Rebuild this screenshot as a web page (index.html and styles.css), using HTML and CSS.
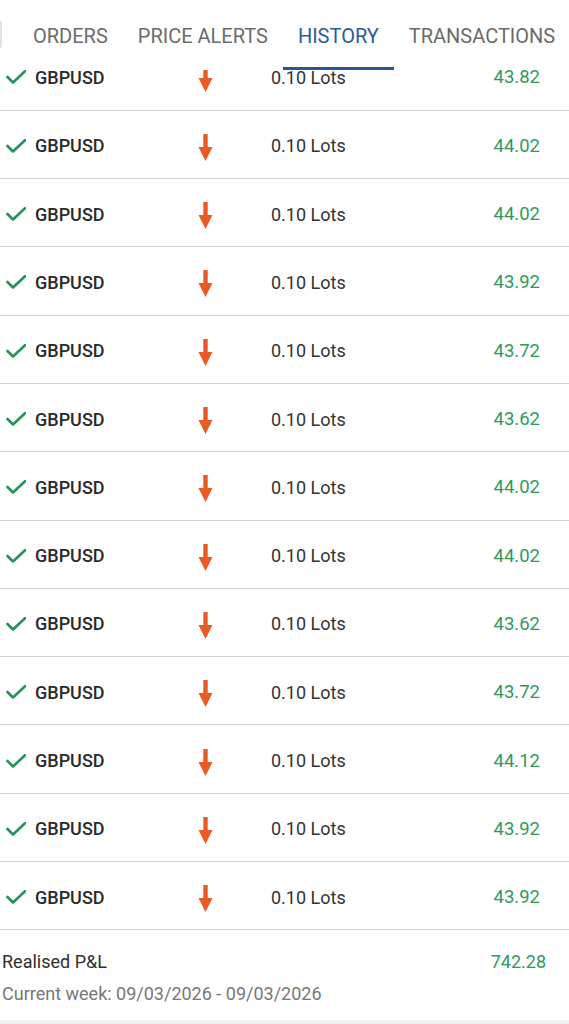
FILE: index.html
```html
<!DOCTYPE html>
<html lang="en">
<head>
<meta charset="utf-8">
<title>History</title>
<link rel="stylesheet" href="styles.css">
</head>
<body>
<div class="screen">
  <nav class="tabs">
    <span class="edge"></span>
    <div class="tab">ORDERS<i class="ind"></i></div>
    <div class="tab">PRICE ALERTS<i class="ind"></i></div>
    <div class="tab active">HISTORY<i class="ind"></i></div>
    <div class="tab">TRANSACTIONS<i class="ind"></i></div>
  </nav>
  <div class="viewport">
    <ul class="list" id="list"></ul>
    <div class="summary">
      <div class="sum-row">
        <span class="sum-label">Realised P&amp;L</span>
        <span class="sum-value">742.28</span>
      </div>
      <div class="sum-week">Current week: 09/03/2026 - 09/03/2026</div>
    </div>
    <div class="band"></div>
  </div>
</div>
<script>
  var values = ["43.82","44.02","44.02","43.92","43.72","43.62","44.02","44.02","43.62","43.72","44.12","43.92","43.92"];
  var check = '<svg class="check" width="20" height="14" viewBox="0 0 20 14"><polyline points="1.5,7 7,12.5 19,1.2" fill="none" stroke="#23935a" stroke-width="2.6" stroke-linecap="round" stroke-linejoin="round"/></svg>';
  var arrow = '<svg class="arrow" width="15" height="27" viewBox="0 0 15 27"><rect x="5.3" y="0" width="4.4" height="14" fill="#ea5a24"/><polygon points="0.5,13 14.5,13 7.5,27" fill="#ea5a24"/></svg>';
  var html = "";
  values.forEach(function (v) {
    html += '<li class="row"><span class="c-check">' + check + '</span><span class="sym">GBPUSD</span><span class="c-arrow">' + arrow + '</span><span class="lots">0.10 Lots</span><span class="val">' + v + '</span></li>';
  });
  document.getElementById("list").innerHTML = html;
</script>
</body>
</html>
```
FILE: styles.css
```css
html, body {
  margin: 0;
  padding: 0;
  background: #ffffff;
}
.screen {
  width: 569px;
  height: 1024px;
  overflow: hidden;
  display: flex;
  flex-direction: column;
  font-family: Roboto, "Liberation Sans", sans-serif;
}
.tabs {
  position: relative;
  z-index: 2;
  height: 70px;
  flex: none;
  display: flex;
  align-items: stretch;
  background: #ffffff;
  white-space: nowrap;
}
.edge {
  flex: none;
  width: 2px;
  height: 27px;
  margin-top: 21px;
  margin-right: 16px;
  background: #e2e2e2;
  border-radius: 0 2px 2px 0;
}
.tab {
  display: flex;
  flex-direction: column;
  align-items: center;
  padding: 25px 15px 0;
  font-size: 20px;
  line-height: 22px;
  color: #6b6b6b;
}
.tab .ind {
  display: block;
  margin: auto -15px 0;
  align-self: stretch;
  height: 3px;
}
.tab.active {
  color: #2a5b9c;
}
.tab.active .ind {
  background: #2a5595;
}
.viewport {
  flex: 1;
  overflow: hidden;
  display: flex;
  flex-direction: column;
}
.list {
  list-style: none;
  margin: -27.8px 0 0;
  padding: 0;
}
.row {
  box-sizing: border-box;
  height: 68.33px;
  padding-top: 3px;
  border-bottom: 1px solid #d4d4d4;
  display: grid;
  grid-template-columns: 35px 156px 28px 1fr auto;
  align-items: center;
  padding-right: 29px;
  font-size: 18px;
  color: #2b2b2b;
}
.c-check {
  padding-left: 6px;
  display: flex;
  align-items: center;
}
.sym {
  font-weight: 500;
  color: #2a2a2a;
}
.c-arrow {
  display: flex;
  justify-content: center;
  align-items: center;
  padding-top: 3px;
}
.lots {
  padding-left: 52px;
  color: #333333;
}
.val {
  font-size: 18.5px;
  color: #2e9a5c;
  text-align: right;
}
.summary {
  padding: 21px 23px 15px 2px;
  font-size: 18px;
  line-height: 22px;
}
.sum-row {
  display: flex;
  justify-content: space-between;
  color: #2f2f2f;
}
.sum-value {
  color: #2e9a5c;
}
.sum-week {
  margin-top: 10px;
  color: #777777;
}
.band {
  flex: 1;
  background: #f1f1f1;
}
```
